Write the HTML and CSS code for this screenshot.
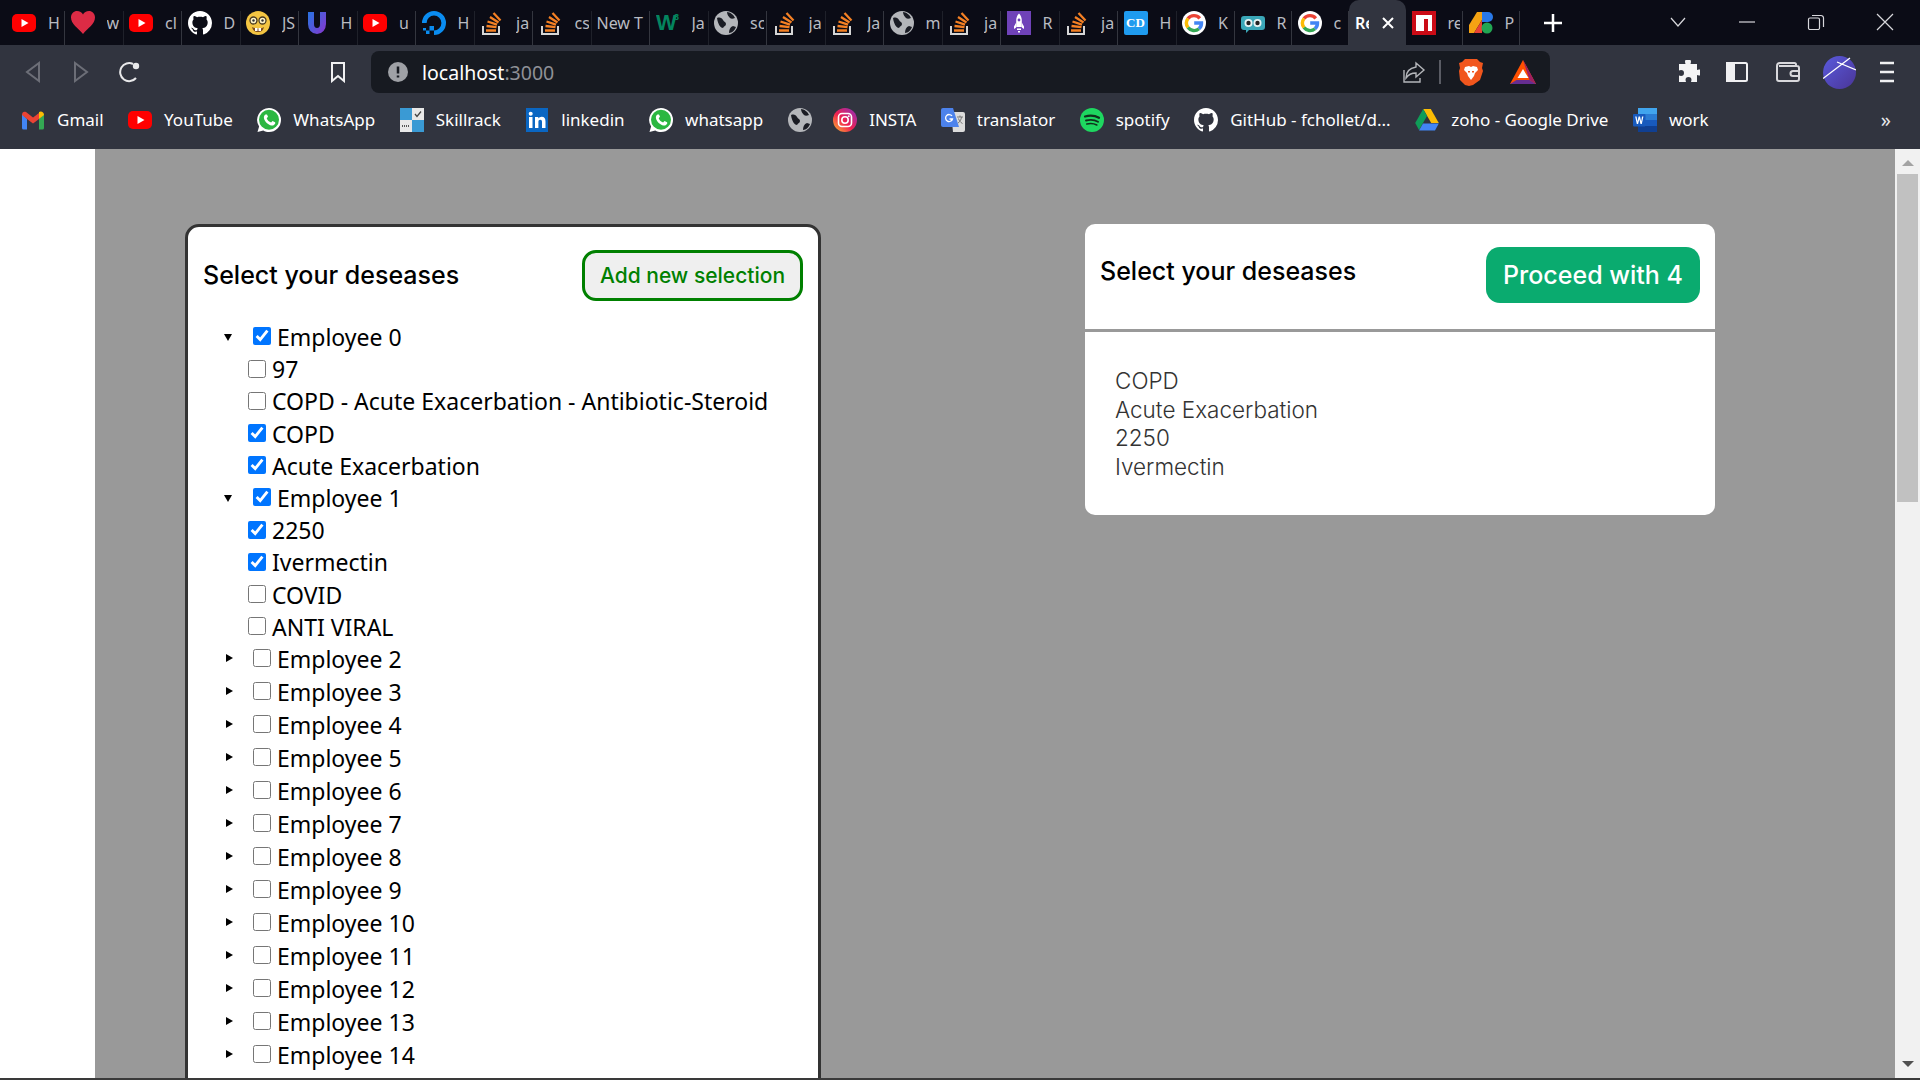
FILE: index.html
```html
<!DOCTYPE html>
<html lang="en">
<head>
    <meta charset="UTF-8">
    <title>React App</title>
    <link rel="stylesheet" href="styles.css">
</head>
<body>
    <!-- shared icons -->
    <svg class="defs" xmlns="http://www.w3.org/2000/svg">
        <defs>
            <linearGradient id="gradU" x1="0" y1="0" x2="1" y2="1"><stop offset="0" stop-color="#2f6fe0"/><stop offset="1" stop-color="#7b3ed0"/></linearGradient>
            <linearGradient id="gradInsta" x1="0" y1="1" x2="1" y2="0"><stop offset="0" stop-color="#fdc030"/><stop offset=".45" stop-color="#f0214f"/><stop offset="1" stop-color="#8a2fc0"/></linearGradient>
            <linearGradient id="gradAvatar" x1="0" y1="0" x2="1" y2="1"><stop offset="0" stop-color="#5a5ade"/><stop offset="1" stop-color="#4a3596"/></linearGradient>
        </defs>
        <symbol id="i-yt" viewBox="0 0 24 24"><rect y="3" width="24" height="18" rx="5" fill="#f00"/><path d="M9.5 8v8l7-4z" fill="#fff"/></symbol>
        <symbol id="i-heart" viewBox="0 0 24 24"><path d="M12 23C7 17 0 13 0 6.500 0 2.500 3 0 6 0c2.700 0 5 1.500 6 3.500C13 1.500 15.300 0 18 0c3 0 6 2.500 6 6.500C24 13 17 17 12 23z" fill="#dc2b45"/></symbol>
        <symbol id="i-gh" viewBox="0 0 16 16"><path fill="#fff" d="M8 0C3.580 0 0 3.580 0 8c0 3.540 2.290 6.530 5.470 7.590.4.070.55-.17.55-.38 0-.19-.01-.82-.01-1.490-2.010.37-2.530-.49-2.690-.94-.09-.23-.48-.94-.82-1.130-.28-.15-.68-.52-.01-.53.63-.01 1.080.58 1.230.82.72 1.210 1.870.87 2.330.66.07-.52.28-.87.51-1.070-1.780-.2-3.640-.89-3.640-3.950 0-.87.31-1.590.82-2.150-.08-.2-.36-1.020.08-2.120 0 0 .67-.21 2.200.82.64-.18 1.320-.27 2-.27.68 0 1.360.09 2 .27 1.530-1.040 2.200-.82 2.200-.82.44 1.100.16 1.920.08 2.120.51.56.82 1.270.82 2.150 0 3.070-1.870 3.750-3.650 3.950.29.25.54.73.54 1.480 0 1.070-.01 1.930-.01 2.200 0 .21.15.46.55.38A8.013 8.013 0 0016 8c0-4.420-3.580-8-8-8z"/></symbol>
        <symbol id="i-nerd" viewBox="0 0 24 24"><circle cx="12" cy="12" r="12" fill="#f4c542"/><circle cx="7.500" cy="9.500" r="3.500" fill="#fff4c8" stroke="#4a3a20" stroke-width="1.300"/><circle cx="16.500" cy="9.500" r="3.500" fill="#fff4c8" stroke="#4a3a20" stroke-width="1.300"/><circle cx="7.500" cy="9.500" r="1.200" fill="#333"/><circle cx="16.500" cy="9.500" r="1.200" fill="#333"/><path d="M6 16c3 2 9 2 12 0-1 4-3 5-6 5s-5-1-6-5z" fill="#7a4a20"/><path d="M9 17h2.500v3H9zM12.500 17H15v3h-2.500z" fill="#fff"/></symbol>
        <symbol id="i-u" viewBox="0 0 24 24"><path d="M6 1v12a6 7 0 0 0 12 0V1" fill="none" stroke="url(#gradU)" stroke-width="6"/></symbol>
        <symbol id="i-do" viewBox="0 0 24 24"><path d="M12 24v-4.600a7.400 7.400 0 1 0-7.400-7.400H0a12 12 0 1 1 12 12z" fill="#0a8cf0"/><path d="M7.500 19.500H12V15H7.500zM4 23h3.500v-3.500H4zM1 19.500h3V17H1z" fill="#0a8cf0"/></symbol>
        <symbol id="i-so" viewBox="0 0 24 24"><path d="M3 15v8h16v-8" fill="none" stroke="#d6d6d6" stroke-width="2"/><g stroke="#f48024" stroke-width="2.300"><path d="M6 19.500h10M6.500 15l10 1.200M7.500 10.500l9.500 3.200M10 6l8.500 5.500M13.500 2l7 7.500"/></g></symbol>
        <symbol id="i-globe" viewBox="0 0 24 24"><circle cx="12" cy="12" r="12" fill="#b4b6ba"/><path d="M3 7c3-1 5 0 6 2s3 2 3 4-2 2-3 4c-2 0-5-3-6-10zM13 1c3 0 7 3 8 6-2 1-4 1-5 0s-3-3-3-6zM15 22c0-3 1-6 4-7l3 1c-1 3-4 6-7 6z" fill="#1a1c24"/></symbol>
        <symbol id="i-rocket" viewBox="0 0 24 24"><rect width="24" height="24" fill="#6f42b8"/><path d="M12 2.500c2 1.800 2.800 4.500 2.800 7.500v6H9.200v-6c0-3 .8-5.700 2.800-7.500z" fill="#fff"/><path d="M9.200 11.500L7 15.500V18l2.200-1.500zM14.800 11.500l2.200 4V18l-2.200-1.500zM10 17.500h4V19h-4zM11 20h2v1.500h-2z" fill="#fff"/><circle cx="12" cy="9" r="1.400" fill="#6f42b8"/></symbol>
        <symbol id="i-g" viewBox="0 0 24 24"><circle cx="12" cy="12" r="12" fill="#fff"/><g fill="none" stroke-width="3.400"><path d="M17.800 7.300A7.600 7.600 0 0 0 6 7.500" stroke="#ea4335"/><path d="M6 7.500a7.600 7.600 0 0 0 0 9" stroke="#fbbc05"/><path d="M6 16.500a7.600 7.600 0 0 0 11 1.300" stroke="#34a853"/><path d="M17 17.800A7.500 7.500 0 0 0 19.500 12H12.200" stroke="#4285f4"/></g></symbol>
        <symbol id="i-owl" viewBox="0 0 24 24"><path d="M3 5h18a3 3 0 0 1 3 3v8a3 3 0 0 1-3 3H8l-3 3v-3H3a3 3 0 0 1-3-3V8a3 3 0 0 1 3-3z" fill="#3aa7b8"/><circle cx="7.500" cy="12" r="4" fill="#e8f4f4"/><circle cx="16.500" cy="12" r="4" fill="#e8f4f4"/><circle cx="7.500" cy="12" r="2.200" fill="#222"/><circle cx="16.500" cy="12" r="2.200" fill="#222"/></symbol>
        <symbol id="i-npm" viewBox="0 0 24 24"><rect width="24" height="24" fill="#cb0b16"/><path d="M4 4h16v16h-4V8h-4v12H4z" fill="#fff"/></symbol>
        <symbol id="i-p" viewBox="0 0 24 24"><path d="M0 14L8 1h5v8L5 22H0z" fill="#f5a313"/><path d="M5 22L13 9v13z" fill="#ea4335"/><path d="M13 1h6a5 5 0 0 1 0 10h-6z" fill="#2979e8"/><circle cx="18" cy="17" r="5.500" fill="#22a652"/></symbol>
        <symbol id="i-gmail" viewBox="0 0 24 24"><path d="M1 6v14a1.500 1.500 0 0 0 1.500 1.500H6V11z" fill="#4285f4"/><path d="M23 6v14a1.500 1.500 0 0 1-1.500 1.500H18V11z" fill="#34a853"/><path d="M1 7l5 4 6 4.500 6-4.500V5l-6 4.500L5 4C3 3 1 4 1 7z" fill="#ea4335"/><path d="M18 5v6l5-4c0-3-3-4.500-5-3z" fill="#fbbc05"/></symbol>
        <symbol id="i-wa" viewBox="0 0 24 24"><path d="M12 0a12 12 0 0 1 0 24c-2 0-4-.5-5.700-1.500L.5 24l1.600-5.500A12 12 0 0 1 12 0z" fill="#fff"/><circle cx="12" cy="11.800" r="10" fill="#2bb741"/><path d="M8.500 6.500c-1 .6-2 2-1.500 4 .8 3 4 6.500 7.500 7 2 .2 3.500-1 3.800-2.300l-.2-1-2.600-1.200-1.400 1.500c-2-.6-3.600-2.200-4.400-4.200L11 8.700 10 6.500z" fill="#fff"/></symbol>
        <symbol id="i-skill" viewBox="0 0 24 24"><rect width="12" height="12" fill="#3a9ad4"/><rect x="12" width="12" height="12" fill="#e8e8e8"/><rect y="12" width="12" height="12" fill="#e8e8e8"/><rect x="12" y="12" width="12" height="12" fill="#3a9ad4"/><path d="M15 6l2 2.500 4-5" fill="none" stroke="#444" stroke-width="1.300"/><path d="M2 18h8" stroke="#555" stroke-width="2" stroke-dasharray="1 1"/></symbol>
        <symbol id="i-in" viewBox="0 0 24 24"><rect width="22" height="24" x="1" fill="#0a66c2"/><rect x="4" y="9" width="3.500" height="11" fill="#fff"/><circle cx="5.700" cy="5.800" r="2" fill="#fff"/><path d="M10 9h3.300v1.600c.8-1.200 2-1.900 3.400-1.900 2.700 0 3.800 1.700 3.800 4.700V20H17v-6c0-1.500-.6-2.300-1.800-2.300s-1.800.9-1.800 2.300v6H10z" fill="#fff"/></symbol>
        <symbol id="i-insta" viewBox="0 0 24 24"><circle cx="12" cy="12" r="12" fill="url(#gradInsta)"/><rect x="5.500" y="5.500" width="13" height="13" rx="3.500" fill="none" stroke="#fff" stroke-width="1.600"/><circle cx="12" cy="12" r="3.200" fill="none" stroke="#fff" stroke-width="1.600"/><circle cx="15.800" cy="8.200" r=".9" fill="#fff"/></symbol>
        <symbol id="i-trans" viewBox="0 0 24 24"><path d="M10 4h12a2 2 0 0 1 2 2v16a2 2 0 0 1-2 2H12z" fill="#dcdcdc"/><path d="M2 0h10l6 19H2a2 2 0 0 1-2-2V2a2 2 0 0 1 2-2z" fill="#4c82ec"/><path d="M11 8a3.500 3.500 0 1 0 .5 3H8.500" fill="none" stroke="#fff" stroke-width="1.300"/><path d="M16 9h6M19 7.500V9M17 15c2-1 3-3 3.500-6M17.500 10.500c.5 2 2 4 4 5" fill="none" stroke="#777" stroke-width="1"/></symbol>
        <symbol id="i-spot" viewBox="0 0 24 24"><circle cx="12" cy="12" r="12" fill="#1ed760"/><g fill="none" stroke="#10301c" stroke-linecap="round"><path d="M5 8.500c4.500-1.300 10-1 14 1.300" stroke-width="2.200"/><path d="M6 12.500c4-1 8.500-.8 12 1.200" stroke-width="1.900"/><path d="M6.800 16c3.500-.8 7-.6 10 1" stroke-width="1.600"/></g></symbol>
        <symbol id="i-drive" viewBox="0 0 24 24"><path d="M8.200 1h7.600l8 14h-7.600z" fill="#fbbc05"/><path d="M8.200 1L.2 15l3.800 7 8-14z" fill="#0f9d58"/><path d="M8 15.500h15.800l-3.800 7H4z" fill="#4285f4"/></symbol>
        <symbol id="i-word" viewBox="0 0 24 24"><rect x="5" y="0" width="19" height="6" fill="#41a5ee"/><rect x="5" y="6" width="19" height="6" fill="#2b7cd3"/><rect x="5" y="12" width="19" height="6" fill="#185abd"/><rect x="5" y="18" width="19" height="6" fill="#103f91"/><rect x="0" y="6" width="12.500" height="12.500" rx="1" fill="#185abd"/><path d="M2.200 8.500l1.600 7.500h1.300l1.200-4.800L7.500 16h1.300l1.600-7.500H9l-.8 4.900L7 8.500H5.600l-1.200 4.900-.8-4.900z" fill="#fff"/></symbol>
    </svg>

    <header class="tabstrip">
        <div class="tab"><svg class="ico"><use href="#i-yt"/></svg><span class="title">H</span></div>
        <div class="tab"><svg class="ico"><use href="#i-heart"/></svg><span class="title">w</span></div>
        <div class="tab"><svg class="ico"><use href="#i-yt"/></svg><span class="title">cl</span></div>
        <div class="tab"><svg class="ico"><use href="#i-gh"/></svg><span class="title">D</span></div>
        <div class="tab"><svg class="ico"><use href="#i-nerd"/></svg><span class="title">JS</span></div>
        <div class="tab"><svg class="ico"><use href="#i-u"/></svg><span class="title">H</span></div>
        <div class="tab"><svg class="ico"><use href="#i-yt"/></svg><span class="title">u</span></div>
        <div class="tab"><svg class="ico"><use href="#i-do"/></svg><span class="title">H</span></div>
        <div class="tab"><svg class="ico"><use href="#i-so"/></svg><span class="title">ja</span></div>
        <div class="tab"><svg class="ico"><use href="#i-so"/></svg><span class="title">cs</span></div>
        <div class="tab tab-plain"><span class="title">New T</span></div>
        <div class="tab"><svg class="ico" viewBox="0 0 24 24"><text class="w3-mark" x="0" y="19">W</text><text class="w3-sup" x="18" y="9">3</text></svg><span class="title">Ja</span></div>
        <div class="tab"><svg class="ico"><use href="#i-globe"/></svg><span class="title">sc</span></div>
        <div class="tab"><svg class="ico"><use href="#i-so"/></svg><span class="title">ja</span></div>
        <div class="tab"><svg class="ico"><use href="#i-so"/></svg><span class="title">Ja</span></div>
        <div class="tab"><svg class="ico"><use href="#i-globe"/></svg><span class="title">m</span></div>
        <div class="tab"><svg class="ico"><use href="#i-so"/></svg><span class="title">ja</span></div>
        <div class="tab"><svg class="ico"><use href="#i-rocket"/></svg><span class="title">R</span></div>
        <div class="tab"><svg class="ico"><use href="#i-so"/></svg><span class="title">ja</span></div>
        <div class="tab"><span class="cd-mark">CD</span><span class="title">H</span></div>
        <div class="tab"><svg class="ico"><use href="#i-g"/></svg><span class="title">K</span></div>
        <div class="tab tab-narrow"><svg class="ico"><use href="#i-owl"/></svg><span class="title">R</span></div>
        <div class="tab tab-narrow"><svg class="ico"><use href="#i-g"/></svg><span class="title">c</span></div>
        <div class="tab tab-narrow tab-active"><span class="title">Re</span><svg class="tab-close" viewBox="0 0 12 12"><path d="M1 1l10 10M11 1L1 11"/></svg></div>
        <div class="tab tab-narrow"><svg class="ico"><use href="#i-npm"/></svg><span class="title">re</span></div>
        <div class="tab tab-narrow"><svg class="ico"><use href="#i-p"/></svg><span class="title">P</span></div>
        <svg class="new-tab" viewBox="0 0 18 18"><path d="M9 0v18M0 9h18"/></svg>
        <div class="win-controls">
            <svg class="win-btn" viewBox="0 0 16 16"><path d="M1 4l7 8 7-8"/></svg>
            <svg class="win-btn" viewBox="0 0 16 16"><path d="M0 8h16"/></svg>
            <svg class="win-btn" viewBox="0 0 16 16"><path d="M2 4h8a1.500 1.500 0 0 1 1.500 1.500V14a1.500 1.500 0 0 1-1.500 1.500H2A1.500 1.500 0 0 1 .5 14V5.500A1.500 1.500 0 0 1 2 4zM4 1.500h9A2.500 2.500 0 0 1 15.500 4v9"/></svg>
            <svg class="win-btn" viewBox="0 0 16 16"><path d="M0 0l16 16M16 0L0 16"/></svg>
        </div>
    </header>

    <div class="toolbar">
        <svg class="nav-btn nav-off" viewBox="0 0 16 22"><path d="M14 2v18L2 11z"/></svg>
        <svg class="nav-btn nav-off" viewBox="0 0 16 22"><path d="M2 2v18l12-9z"/></svg>
        <svg class="reload" viewBox="0 0 22 22"><path d="M17 17a9 9 0 1 1-3-14"/><circle cx="17" cy="5" r="3.200"/></svg>
        <svg class="bookmark-btn" viewBox="0 0 16 22"><path d="M2 2h12v18l-6-5-6 5z"/></svg>
        <div class="urlbar">
            <svg class="info" viewBox="0 0 20 20"><circle cx="10" cy="10" r="10"/><path d="M10 4.500v7M10 13.500v2"/></svg>
            <span class="url">localhost<span class="url-port">:3000</span></span>
            <svg class="share" viewBox="0 0 24 24"><path d="M14 3l8 7-8 7v-4c-5 0-8 2-10 5 0-6 4-10 10-11zM2 10v12h16v-4"/></svg>
            <span class="url-sep"></span>
            <svg class="brave" viewBox="0 0 24 28"><path d="M6 1h12l3 3 3 1-1 5 1 3-3 9-7 5-4 1-4-1-2-2-3-3-1-9 1-3-1-5 3-1z" fill="#f1561d"/><path d="M6 9l4-1 2 1 2-1 4 1 1 3-3 3-1 3-3 4-3-4-1-3-3-3z" fill="#fff"/><path d="M9 13h2v1.500H9zM13 13h2v1.500h-2z" fill="#f1561d"/></svg>
            <svg class="bat" viewBox="0 0 26 24"><path d="M13 0l13 24H0z" fill="#ff5000"/><path d="M13 0l13 24-6.500-4z" fill="#9e1f63"/><path d="M0 24l6.500-4h13l6.500 4z" fill="#662d91"/><path d="M13 9l5.500 9h-11z" fill="#fff"/></svg>
        </div>
        <svg class="tool-btn puzzle" viewBox="0 0 24 24"><path d="M9 2a3 3 0 0 1 6 0l-.5 2H21v6l2-.5a3 3 0 0 1 0 6L21 15v7h-6l.5-2a3 3 0 0 0-6 0l.5 2H3v-6.500l2 .5a3 3 0 0 0 0-6l-2 .5V4h6.500z"/></svg>
        <svg class="tool-btn panel" viewBox="0 0 24 24"><rect x="2" y="3" width="20" height="18" rx="1.500"/><rect x="2" y="3" width="7" height="18" class="panel-fill"/></svg>
        <svg class="tool-btn wallet" viewBox="0 0 24 24"><path d="M20 6V4.500A1.500 1.500 0 0 0 18.500 3H4a3 3 0 0 0-3 3v13a2 2 0 0 0 2 2h18a2 2 0 0 0 2-2V8a2 2 0 0 0-2-2H3M23 11h-6a2.500 2.500 0 0 0 0 5h6"/></svg>
        <svg class="avatar" viewBox="0 0 33 33"><circle cx="16.500" cy="16.500" r="16.500" fill="url(#gradAvatar)"/><path d="M0 22.500L27 2M14 6l19 8" stroke="#fff" stroke-width="1.300" fill="none"/></svg>
        <svg class="menu-btn" viewBox="0 0 14 22"><path d="M0 2h14M0 11h14M0 20h14"/></svg>
    </div>

    <nav class="bookmarks">
        <a class="mark"><svg class="ico"><use href="#i-gmail"/></svg>Gmail</a>
        <a class="mark"><svg class="ico"><use href="#i-yt"/></svg>YouTube</a>
        <a class="mark"><svg class="ico"><use href="#i-wa"/></svg>WhatsApp</a>
        <a class="mark"><svg class="ico"><use href="#i-skill"/></svg>Skillrack</a>
        <a class="mark"><svg class="ico"><use href="#i-in"/></svg>linkedin</a>
        <a class="mark"><svg class="ico"><use href="#i-wa"/></svg>whatsapp</a>
        <a class="mark mark-icon"><svg class="ico"><use href="#i-globe"/></svg></a>
        <a class="mark"><svg class="ico"><use href="#i-insta"/></svg>INSTA</a>
        <a class="mark"><svg class="ico"><use href="#i-trans"/></svg>translator</a>
        <a class="mark"><svg class="ico"><use href="#i-spot"/></svg>spotify</a>
        <a class="mark"><svg class="ico"><use href="#i-gh"/></svg>GitHub - fchollet/d...</a>
        <a class="mark"><svg class="ico"><use href="#i-drive"/></svg>zoho - Google Drive</a>
        <a class="mark"><svg class="ico"><use href="#i-word"/></svg>work</a>
        <span class="more">»</span>
    </nav>

    <div class="viewport">
        <div class="gutter"></div>
        <main class="overlay">
            <section class="card card-tree">
                <div class="card-head">
                    <h2 class="card-title">Select your deseases</h2>
                    <button class="btn-add">Add new selection</button>
                </div>
                <ul class="tree">
                    <li class="row row-parent"><span class="caret caret-open"></span><input type="checkbox" checked><span>Employee 0</span></li>
                    <li class="row row-child"><input type="checkbox"><span>97</span></li>
                    <li class="row row-child"><input type="checkbox"><span>COPD - Acute Exacerbation - Antibiotic-Steroid</span></li>
                    <li class="row row-child"><input type="checkbox" checked><span>COPD</span></li>
                    <li class="row row-child"><input type="checkbox" checked><span>Acute Exacerbation</span></li>
                    <li class="row row-parent"><span class="caret caret-open"></span><input type="checkbox" checked><span>Employee 1</span></li>
                    <li class="row row-child"><input type="checkbox" checked><span>2250</span></li>
                    <li class="row row-child"><input type="checkbox" checked><span>Ivermectin</span></li>
                    <li class="row row-child"><input type="checkbox"><span>COVID</span></li>
                    <li class="row row-child"><input type="checkbox"><span>ANTI VIRAL</span></li>
                    <li class="row row-closed"><span class="caret"></span><input type="checkbox"><span>Employee 2</span></li>
                    <li class="row row-closed"><span class="caret"></span><input type="checkbox"><span>Employee 3</span></li>
                    <li class="row row-closed"><span class="caret"></span><input type="checkbox"><span>Employee 4</span></li>
                    <li class="row row-closed"><span class="caret"></span><input type="checkbox"><span>Employee 5</span></li>
                    <li class="row row-closed"><span class="caret"></span><input type="checkbox"><span>Employee 6</span></li>
                    <li class="row row-closed"><span class="caret"></span><input type="checkbox"><span>Employee 7</span></li>
                    <li class="row row-closed"><span class="caret"></span><input type="checkbox"><span>Employee 8</span></li>
                    <li class="row row-closed"><span class="caret"></span><input type="checkbox"><span>Employee 9</span></li>
                    <li class="row row-closed"><span class="caret"></span><input type="checkbox"><span>Employee 10</span></li>
                    <li class="row row-closed"><span class="caret"></span><input type="checkbox"><span>Employee 11</span></li>
                    <li class="row row-closed"><span class="caret"></span><input type="checkbox"><span>Employee 12</span></li>
                    <li class="row row-closed"><span class="caret"></span><input type="checkbox"><span>Employee 13</span></li>
                    <li class="row row-closed"><span class="caret"></span><input type="checkbox"><span>Employee 14</span></li>
                </ul>
            </section>

            <section class="card card-summary">
                <div class="summary-head">
                    <h2 class="summary-title">Select your deseases</h2>
                    <button class="btn-proceed">Proceed with 4</button>
                </div>
                <ul class="summary-list">
                    <li>COPD</li>
                    <li>Acute Exacerbation</li>
                    <li>2250</li>
                    <li>Ivermectin</li>
                </ul>
            </section>
        </main>
        <div class="scrollbar">
            <span class="arrow arrow-up"></span>
            <div class="thumb"></div>
            <span class="arrow arrow-down"></span>
        </div>
    </div>
    <div class="bottom-line"></div>
</body>
</html>
```

FILE: styles.css
```css
* {
    box-sizing: border-box;
}

html, body {
    height: 100%;
}

body {
    margin: 0;
    font-family: 'Noto Sans', sans-serif;
    background-color: #fff;
    display: flex;
    flex-direction: column;
    overflow: hidden;
}

ul {
    list-style: none;
    margin: 0;
    padding: 0;
}

.defs {
    width: 0;
    height: 0;
    flex: none;
}

.ico {
    width: 24px;
    height: 24px;
    flex: none;
}

/* tab strip */
.tabstrip {
    height: 45px;
    flex: none;
    background-color: #0b0c16;
    display: flex;
    padding-left: 6.5px;
}

.tab {
    width: 58.5px;
    height: 45px;
    flex: none;
    padding: 11px 3px 0 5.5px;
    display: flex;
    gap: 12px;
    overflow: hidden;
    color: #b9bbc2;
    font-size: 16px;
    line-height: 24px;
    box-shadow: inset -1px 0 0 0 #34363f;
    clip-path: inset(11px 0 0 0);
}

.tab-narrow {
    width: 57px;
}

.tab-plain {
    padding-left: 5px;
}

.title {
    overflow: hidden;
    white-space: nowrap;
    flex: 1;
    min-width: 0;
}

.tab-active {
    background-color: #31343f;
    border-radius: 10px 10px 0 0;
    clip-path: none;
    box-shadow: none;
    color: #fff;
    gap: 13px;
    padding-left: 6px;
    font-weight: 600;
}

.tab-close {
    width: 12px;
    height: 12px;
    flex: none;
    margin: 6px 9px 0 0;
    stroke: #fff;
    stroke-width: 2;
}

.cd-mark {
    width: 24px;
    height: 24px;
    flex: none;
    background-color: #1f9bef;
    color: #fff;
    font-family: 'Liberation Serif', serif;
    font-size: 13px;
    font-weight: 700;
    text-align: center;
    border-radius: 2px;
}

.w3-mark {
    font-family: 'Liberation Sans', sans-serif;
    font-size: 22px;
    font-weight: 700;
    fill: #04855f;
}

.w3-sup {
    font-family: 'Liberation Sans', sans-serif;
    font-size: 9px;
    font-weight: 700;
    fill: #04855f;
}

.new-tab {
    width: 18px;
    height: 18px;
    margin: 14px 0 0 24px;
    stroke: #fff;
    stroke-width: 2.5;
    flex: none;
}

.win-controls {
    margin-left: auto;
    display: flex;
    gap: 53px;
    padding: 14px 27px 0 0;
}

.win-btn {
    width: 16px;
    height: 16px;
    fill: none;
    stroke: #d8d8dc;
    stroke-width: 1.2;
    overflow: visible;
}

/* address row */
.toolbar {
    height: 55px;
    flex: none;
    background-color: #31343f;
    display: flex;
    align-items: flex-start;
}

.nav-btn {
    width: 16px;
    height: 22px;
    flex: none;
    margin-top: 16px;
    fill: none;
    stroke: #6c6e77;
    stroke-width: 2;
}

.nav-btn:first-child {
    margin-left: 25px;
}

.nav-btn + .nav-btn {
    margin-left: 32px;
}

.reload {
    width: 22px;
    height: 22px;
    margin: 16px 0 0 30px;
    flex: none;
    fill: none;
    stroke: #e8e8ea;
    stroke-width: 2;
}

.reload circle {
    fill: #e8e8ea;
    stroke: none;
}

.bookmark-btn {
    width: 16px;
    height: 22px;
    margin: 16px 0 0 189px;
    flex: none;
    fill: none;
    stroke: #f0f0f2;
    stroke-width: 2;
}

.urlbar {
    width: 1179px;
    height: 42px;
    margin: 6px 0 0 25px;
    flex: none;
    background-color: #171a21;
    border-radius: 8px;
    display: flex;
    align-items: center;
    padding-left: 17px;
}

.info {
    width: 20px;
    height: 20px;
    flex: none;
    fill: #9fa1a6;
    stroke: #171a21;
    stroke-width: 2.5;
}

.info circle {
    stroke: none;
}

.url {
    margin-left: 14px;
    font-size: 19.500px;
    color: #fff;
}

.url-port {
    color: #8f9197;
}

.share {
    width: 24px;
    height: 24px;
    margin-left: auto;
    flex: none;
    fill: none;
    stroke: #b4b6ba;
    stroke-width: 1.4;
}

.url-sep {
    width: 2px;
    height: 24px;
    margin: 0 0 0 13px;
    background-color: #5a5c64;
}

.brave {
    width: 24px;
    height: 28px;
    margin-left: 18px;
    flex: none;
}

.bat {
    width: 26px;
    height: 24px;
    margin: 0 14px 0 27px;
    flex: none;
}

.tool-btn {
    width: 24px;
    height: 24px;
    margin-top: 15px;
    flex: none;
}

.puzzle {
    margin-left: 126px;
    fill: #f4f4f5;
}

.panel {
    margin-left: 25px;
    fill: none;
    stroke: #f0f0f2;
    stroke-width: 2;
}

.panel-fill {
    fill: #f0f0f2;
}

.wallet {
    margin-left: 27px;
    fill: none;
    stroke: #d8d8dc;
    stroke-width: 2;
}

.avatar {
    width: 33px;
    height: 33px;
    margin: 11px 0 0 23px;
    flex: none;
}

.menu-btn {
    width: 14px;
    height: 22px;
    margin: 16px 0 0 24px;
    flex: none;
    stroke: #f0f0f2;
    stroke-width: 2.5;
}

/* bookmarks */
.bookmarks {
    height: 49px;
    flex: none;
    background-color: #31343f;
    display: flex;
    align-items: center;
    gap: 24.500px;
    padding: 0 0 10px 21px;
    color: #fff;
    font-size: 17px;
}

.mark {
    display: flex;
    align-items: center;
    gap: 12px;
    white-space: nowrap;
}

.mark-icon {
    margin-right: -3px;
}

.more {
    margin-left: auto;
    margin-right: 29px;
    font-size: 20px;
    color: #e8e8ea;
}

/* page */
.viewport {
    flex: 1;
    min-height: 0;
    display: flex;
    overflow: hidden;
}

.gutter {
    width: 95px;
    flex: none;
    background-color: #fff;
}

.overlay {
    flex: 1;
    min-width: 0;
    background-color: #999;
    display: flex;
    align-items: flex-start;
    gap: 264px;
    padding: 75px 0 0 90px;
}

.card {
    background-color: #fff;
    flex: none;
}

/* the tree runs on below the fold */
.card-tree {
    width: 636px;
    border: 3px solid #333;
    border-radius: 14px;
    padding: 23px 15px 400px 16px;
}

.card-head {
    display: flex;
    justify-content: space-between;
    align-items: center;
    margin-bottom: 21px;
}

.card-title {
    margin: 0 0 2px -1px;
    font-family: Inter, sans-serif;
    font-size: 25px;
    font-weight: 500;
    color: #000;
}

.btn-add {
    width: 221px;
    height: 51px;
    background-color: #efefef;
    border: 3px solid #008000;
    border-radius: 14px;
    color: #008000;
    font-family: Inter, sans-serif;
    font-size: 21px;
    font-weight: 500;
    padding: 0 0 1px;
}

.tree {
    color: #000;
    font-size: 23px;
}

.row {
    display: flex;
    align-items: center;
    height: 32.200px;
    white-space: nowrap;
}

.row input {
    width: 18px;
    height: 18px;
    margin: 0 6px 4px 0;
    flex: none;
}

.row span:last-child {
    margin-bottom: 2px;
}

.row-child {
    padding-left: 44px;
}

.row-child input {
    margin-bottom: 3px;
}

.row-parent {
    padding-left: 20px;
}

.row-closed {
    height: 33px;
    padding-left: 22px;
}

.caret {
    width: 0;
    height: 0;
    flex: none;
    margin: 0 20px 4px 0;
    border-style: solid;
    border-width: 4.500px 0 4.500px 7px;
    border-color: transparent transparent transparent #000;
}

.caret-open {
    margin: 0 21px 2px 0;
    border-width: 7px 4.500px 0 4.500px;
    border-color: #000 transparent transparent transparent;
}

.card-summary {
    width: 630px;
    height: 291px;
    border-radius: 10px;
}

.summary-head {
    height: 108px;
    border-bottom: 3px solid #999;
    display: flex;
    justify-content: space-between;
    padding: 23px 15px 0 15px;
}

.summary-title {
    margin: 9px 0 0;
    font-family: Inter, sans-serif;
    font-size: 25px;
    font-weight: 500;
    color: #000;
}

.btn-proceed {
    width: 214px;
    height: 56px;
    background-color: #0aab6f;
    border: none;
    border-radius: 14px;
    color: #fff;
    font-family: Inter, sans-serif;
    font-size: 25px;
    font-weight: 500;
    padding: 0;
}

.summary-list {
    padding: 35px 30px 0;
    font-family: Inter, sans-serif;
    font-size: 22.500px;
    font-weight: 300;
    line-height: 28.600px;
    color: #333;
}

/* scrollbar */
.scrollbar {
    width: 25px;
    flex: none;
    background-color: #f1f1f1;
    display: flex;
    flex-direction: column;
    align-items: center;
}

.arrow {
    width: 0;
    height: 0;
    flex: none;
    border-style: solid;
    border-color: transparent;
}

.arrow-up {
    margin: 11px 0 8px;
    border-width: 0 6px 6px 6px;
    border-bottom-color: #a3a3a3;
}

.thumb {
    width: 21px;
    height: 328px;
    flex: none;
    background-color: #c1c1c1;
}

.arrow-down {
    margin: auto 0 11px;
    border-width: 6px 6px 0 6px;
    border-top-color: #505050;
}

.bottom-line {
    height: 2px;
    flex: none;
    background-color: #3a3a3a;
}
```
